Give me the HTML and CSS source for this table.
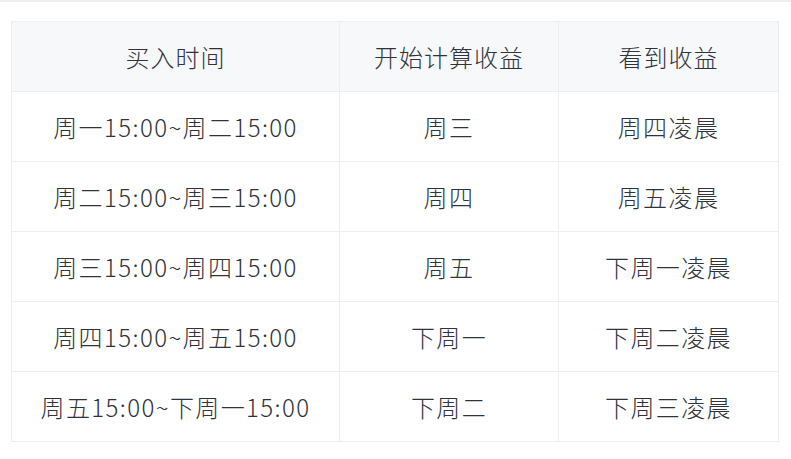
FILE: index.html
```html
<!DOCTYPE html>
<html lang="zh">
<head>
<meta charset="utf-8">
<link rel="stylesheet" href="styles.css">
</head>
<body>
<div class="topline"></div>
<div class="wrap">
<table class="tbl">
  <colgroup><col class="c1"><col class="c2"><col class="c3"></colgroup>
  <thead>
    <tr><th>买入时间</th><th>开始计算收益</th><th>看到收益</th></tr>
  </thead>
  <tbody>
    <tr><td>周一15:00~周二15:00</td><td>周三</td><td>周四凌晨</td></tr>
    <tr><td>周二15:00~周三15:00</td><td>周四</td><td>周五凌晨</td></tr>
    <tr><td>周三15:00~周四15:00</td><td>周五</td><td>下周一凌晨</td></tr>
    <tr><td>周四15:00~周五15:00</td><td>下周一</td><td>下周二凌晨</td></tr>
    <tr><td>周五15:00~下周一15:00</td><td>下周二</td><td>下周三凌晨</td></tr>
  </tbody>
</table>
</div>
</body>
</html>
```
FILE: styles.css
```css
html, body {
  margin: 0;
  padding: 0;
  background: #ffffff;
}
body {
  font-family: "Noto Sans CJK SC", "Noto Sans", sans-serif;
  color: #2f333a;
}
.topline {
  height: 2px;
  background: #efeff1;
}
.wrap {
  padding: 19px 13px 0 11px;
}
.tbl {
  width: 767px;
  border-collapse: collapse;
  table-layout: fixed;
  border: 1px solid #eceef1;
}
.c1 { width: 328px; }
.c2 { width: 219px; }
.c3 { width: 220px; }
.tbl th, .tbl td {
  height: 69px;
  padding: 0;
  border: 1px solid #eceef1;
  text-align: center;
  vertical-align: middle;
  font-size: 24px;
  font-weight: 300;
  letter-spacing: 1.4px;
  line-height: 1;
}
.tbl th {
  background: #f7f8fa;
  letter-spacing: 1px;
}
```
